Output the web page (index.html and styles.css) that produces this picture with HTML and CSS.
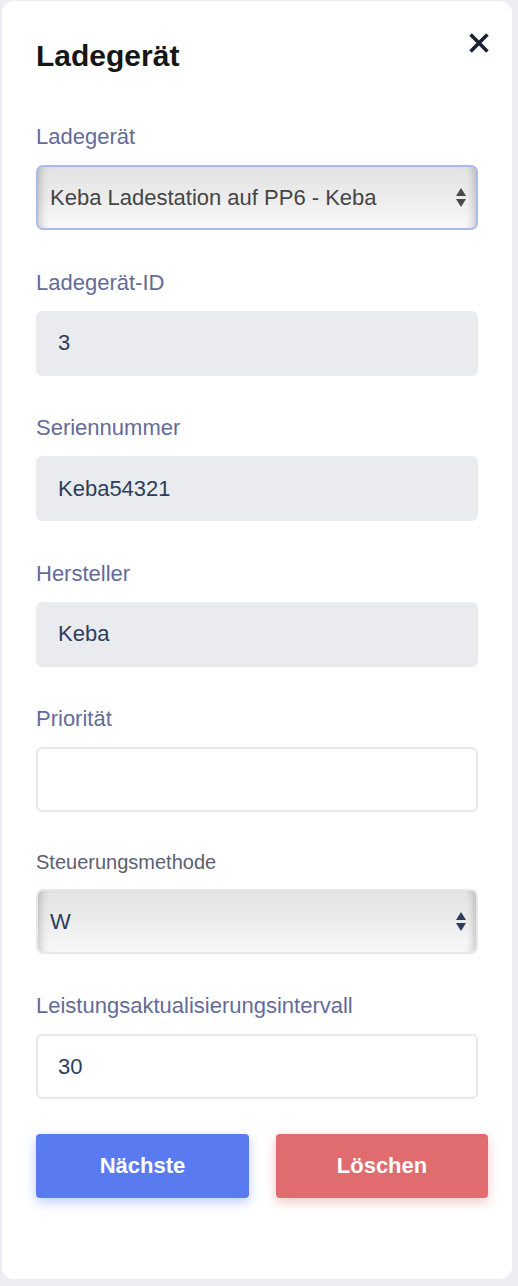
FILE: index.html
```html
<!DOCTYPE html>
<html lang="de">
<head>
<meta charset="utf-8">
<title>Ladegerät</title>
<link rel="stylesheet" href="styles.css">
</head>
<body>
<div class="page">
  <div class="card">
    <div class="header">
      <h1 class="title">Ladegerät</h1>
      <button class="close" aria-label="Schließen">
        <svg width="20" height="20" viewBox="0 0 20 20"><path d="M1.6 1.6 L18.4 18.4 M18.4 1.6 L1.6 18.4" stroke="#1b2234" stroke-width="3.6" stroke-linecap="butt"/></svg>
      </button>
    </div>

    <div class="field">
      <label class="label">Ladegerät</label>
      <div class="select-wrap">
        <select class="select select-focus"><option>Keba Ladestation auf PP6 - Keba</option></select>
        <svg class="arrows" width="10" height="19" viewBox="0 0 10 19"><path d="M5 0 L10 8 L0 8 Z M0 11 L10 11 L5 19 Z" fill="#4a4a4a"/></svg>
      </div>
    </div>

    <div class="field">
      <label class="label">Ladegerät-ID</label>
      <input class="input input-readonly" value="3" readonly>
    </div>

    <div class="field">
      <label class="label">Seriennummer</label>
      <input class="input input-readonly" value="Keba54321" readonly>
    </div>

    <div class="field">
      <label class="label">Hersteller</label>
      <input class="input input-readonly" value="Keba" readonly>
    </div>

    <div class="field">
      <label class="label">Priorität</label>
      <input class="input" value="">
    </div>

    <div class="field">
      <label class="label label-small">Steuerungsmethode</label>
      <div class="select-wrap">
        <select class="select select-plain"><option>W</option></select>
        <svg class="arrows" width="10" height="19" viewBox="0 0 10 19"><path d="M5 0 L10 8 L0 8 Z M0 11 L10 11 L5 19 Z" fill="#2c3e5c"/></svg>
      </div>
    </div>

    <div class="field">
      <label class="label">Leistungsaktualisierungsintervall</label>
      <input class="input" value="30">
    </div>

    <div class="actions">
      <button class="btn btn-primary">Nächste</button>
      <button class="btn btn-danger">Löschen</button>
    </div>
  </div>
</div>
</body>
</html>
```

FILE: styles.css
```css
* { box-sizing: border-box; }

html, body {
  margin: 0;
  padding: 0;
  background: #eceef4;
  font-family: "Liberation Sans", Arial, Helvetica, sans-serif;
}

.page {
  padding: 1px 6px 8px 2px;
}

.card {
  background: #ffffff;
  border-radius: 12px;
  width: 510px;
  padding: 37px 34px 81px 34px;
}

.header {
  display: flex;
  justify-content: space-between;
  align-items: flex-start;
  margin-bottom: 50px;
}

.title {
  margin: 0;
  font-size: 30px;
  line-height: 36px;
  font-weight: 700;
  color: #161616;
}

.close {
  border: 0;
  background: none;
  padding: 0;
  margin: -5px -11px 0 0;
  width: 20px;
  height: 20px;
  display: block;
  cursor: pointer;
}
.close svg { display: block; }

.field {
  display: flex;
  flex-direction: column;
  margin-bottom: 39.5px;
}

.label {
  font-size: 22px;
  line-height: 26px;
  color: #656b99;
  margin-bottom: 15px;
}

.label-small {
  font-size: 20px;
  line-height: 20px;
  padding-bottom: 2px;
  color: #5c6070;
}

.input {
  height: 65px;
  width: 442px;
  border: 2px solid #e6e8ef;
  border-radius: 6px;
  padding: 0 20px;
  font-family: "Liberation Sans", Arial, Helvetica, sans-serif;
  font-size: 22px;
  color: #2c3e5c;
  background: #ffffff;
  outline: none;
}

.input-readonly {
  background: #e9ebef;
  border-color: #e9ebef;
}

.select-wrap {
  position: relative;
  width: 442px;
  height: 65px;
}

.select {
  -webkit-appearance: none;
  appearance: none;
  width: 100%;
  height: 100%;
  border-radius: 7px;
  padding: 0 40px 0 12px;
  font-family: "Liberation Sans", Arial, Helvetica, sans-serif;
  font-size: 22px;
  background: linear-gradient(to bottom, #e3e3e3 0%, #ebebeb 45%, #f9f9f9 100%);
  box-shadow: inset 10px 0 8px -8px rgba(0,0,0,0.22), inset -10px 0 8px -8px rgba(0,0,0,0.22);
  outline: none;
}

.select-focus {
  border: 2px solid #aab9f1;
  color: #454545;
}

.select-plain {
  border: 2px solid #e7e8ec;
  color: #2c3e5c;
}

.arrows {
  position: absolute;
  right: 12px;
  top: 23px;
  pointer-events: none;
}

.actions {
  display: flex;
  gap: 27px;
  margin-top: -4.5px;
  width: 452px;
}

.btn {
  height: 64px;
  border: 0;
  border-radius: 4px;
  font-family: "Liberation Sans", Arial, Helvetica, sans-serif;
  font-size: 22px;
  font-weight: 700;
  color: #ffffff;
  cursor: pointer;
}

.btn-primary {
  width: 213px;
  background: #5a7bef;
  box-shadow: 0 4px 12px rgba(90, 123, 239, 0.4);
}

.btn-danger {
  width: 212px;
  background: #e06c6f;
  box-shadow: 0 4px 12px rgba(224, 108, 111, 0.4);
}
```
